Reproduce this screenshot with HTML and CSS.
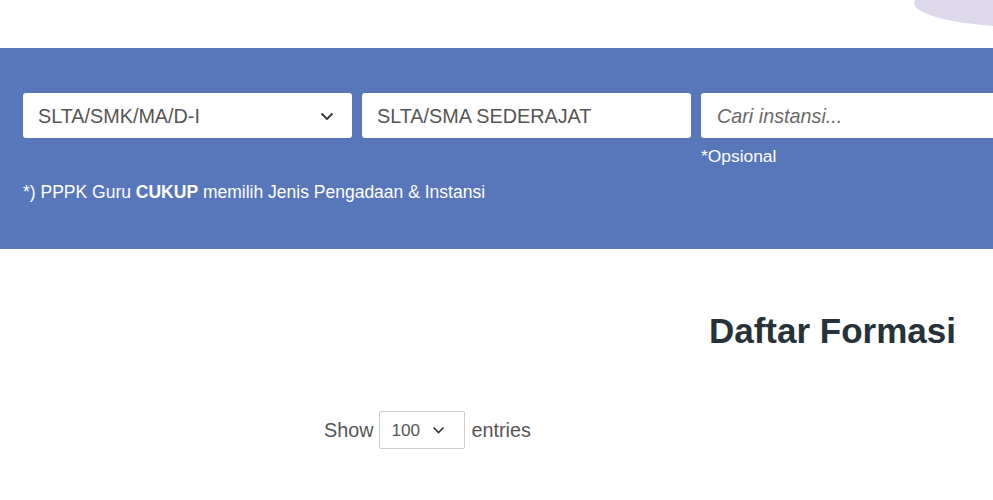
FILE: index.html
```html
<!DOCTYPE html>
<html>
<head>
<meta charset="utf-8">
<link rel="stylesheet" href="styles.css">
</head>
<body>
<header class="top">
  <div class="blob"></div>
</header>
<section class="band">
  <div class="fields">
    <div class="field">
      <div class="control select">
        <span>SLTA/SMK/MA/D-I</span>
        <svg class="chev" width="14" height="9" viewBox="0 0 14 9"><path d="M1.5 1.5 L7 7 L12.5 1.5" fill="none" stroke="#333" stroke-width="1.8"/></svg>
      </div>
    </div>
    <div class="field">
      <div class="control"><span>SLTA/SMA SEDERAJAT</span></div>
    </div>
    <div class="field">
      <div class="control wide"><span class="ph">Cari instansi...</span></div>
      <div class="hint">*Opsional</div>
    </div>
  </div>
  <p class="note">*) PPPK Guru <b>CUKUP</b> memilih Jenis Pengadaan &amp; Instansi</p>
</section>
<main class="content">
  <h2 class="title">Daftar Formasi</h2>
  <div class="length">
    <span>Show</span>
    <div class="small-select">
      <span>100</span>
      <svg width="13" height="8" viewBox="0 0 13 8"><path d="M1.5 1.5 L6.5 6.5 L11.5 1.5" fill="none" stroke="#333" stroke-width="1.7"/></svg>
    </div>
    <span>entries</span>
  </div>
</main>
</body>
</html>
```
FILE: styles.css
```css
html, body {
  margin: 0;
  padding: 0;
  overflow: hidden;
}
body {
  width: 993px;
  height: 500px;
  background: #fff;
  font-family: "Liberation Sans", Arial, sans-serif;
}
.top {
  height: 48px;
  position: relative;
  overflow: hidden;
}
.blob {
  position: absolute;
  left: 914px;
  top: -22px;
  width: 260px;
  height: 50px;
  border-radius: 50%;
  background: #ddd8ea;
}
.band {
  background: #5877bb;
  height: 201px;
  box-sizing: border-box;
  padding: 45px 0 0 23px;
  overflow: hidden;
}
.fields {
  display: flex;
  gap: 10px;
  width: 1200px;
}
.field {
  display: flex;
  flex-direction: column;
}
.control {
  width: 329px;
  height: 45px;
  box-sizing: border-box;
  background: #fff;
  border-radius: 3px;
  padding: 2px 15px 0;
  display: flex;
  align-items: center;
  font-size: 19.8px;
  color: #555;
}
.control.wide {
  width: 400px;
  padding-left: 16px;
}
.select {
  justify-content: space-between;
  padding-right: 18px;
}
.ph {
  font-style: italic;
  color: #6b6b6b;
}
.hint {
  color: #fff;
  font-size: 17.4px;
  margin-top: 8px;
}
.note {
  margin: 15px 0 0;
  color: #fff;
  font-size: 17.5px;
}
.note b {
  font-weight: bold;
}
.content {
  position: relative;
}
.title {
  margin: 62px 37px 0 0;
  text-align: right;
  font-size: 35px;
  font-weight: bold;
  color: #263238;
  line-height: 40px;
}
.length {
  margin: 60px 0 0 324px;
  display: flex;
  align-items: center;
  gap: 6px;
  font-size: 19.8px;
  color: #555;
}
.small-select {
  width: 86px;
  height: 38px;
  box-sizing: border-box;
  border: 1px solid #ccc;
  border-radius: 2px;
  display: flex;
  align-items: center;
  justify-content: space-between;
  padding: 0 19px 0 11px;
  font-size: 17.2px;
  color: #555;
}
```
